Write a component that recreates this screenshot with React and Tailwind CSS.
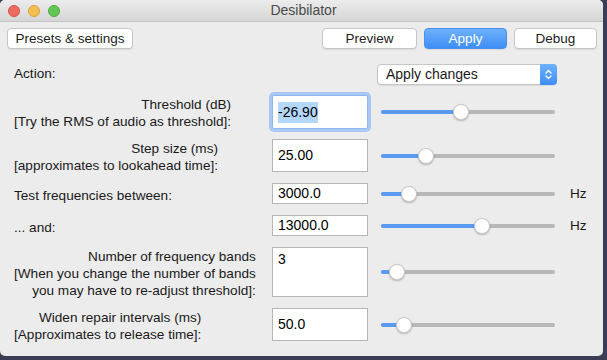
import React from 'react';

const font = { fontFamily: '"Liberation Sans", Arial, sans-serif' };

function MacButton({ text, primary, className }) {
  return (
    <button
      className={
        (primary
          ? 'border-[#4a90ef] bg-gradient-to-b from-[#6cb1fb] to-[#3f8ef5] text-white '
          : 'border-[#c6c6c6] bg-white text-[#222] ') +
        'h-[21px] rounded-[4px] border text-[13.5px] shadow-[0_1px_1px_rgba(0,0,0,0.08)] ' +
        className
      }
    >
      {text}
    </button>
  );
}

function Slider({ pos }) {
  // pos = knob centre in px from the left of the track
  return (
    <div className="relative h-[18px] w-[174px]">
      <div className="absolute left-0 right-0 top-[7px] h-[4px] rounded-full bg-[#b8b8b8]" />
      <div
        className="absolute left-0 top-[7px] h-[4px] rounded-l-full bg-[#5b9af3]"
        style={{ width: pos }}
      />
      <div
        className="absolute top-[1px] h-[16px] w-[16px] rounded-full border border-[#c9c9c9] bg-white shadow-[0_1px_2px_rgba(0,0,0,0.25)]"
        style={{ left: pos - 8 }}
      />
    </div>
  );
}

function Field({ value, h, focus, multi }) {
  return (
    <div
      className={
        'w-[96px] shrink-0 bg-white px-[5px] text-[14px] text-black ' +
        (focus
          ? 'rounded-[2px] border border-[#8fb6ee] ring-[3px] ring-[#a9c8f3] '
          : 'border border-[#b7b7b7] ') +
        (multi ? 'pt-[1px]' : 'flex items-center')
      }
      style={{ height: h }}
    >
      {focus ? <span className="bg-[#b3d7ff]">{value}</span> : value}
    </div>
  );
}

function Row({ label, value, h, knob, hz, focus, multi, mb, lt }) {
  return (
    <div className="flex items-start" style={{ height: h, marginBottom: mb }}>
      <div className="w-[272px] shrink-0 pl-[14px]">
        <div
          className="inline-block whitespace-nowrap text-right text-[13.6px] leading-[17px] text-[#1a1a1a]"
          style={{ paddingTop: lt }}
        >
          {label.map((l) => (
            <div key={l}>{l}</div>
          ))}
        </div>
      </div>
      <Field value={value} h={h} focus={focus} multi={multi} />
      <div className="ml-[13px]" style={{ marginTop: (h - 18) / 2 }}>
        <Slider pos={knob} />
      </div>
      {hz && (
        <div
          className="ml-[15px] text-[13.6px] leading-[17px] text-[#1a1a1a]"
          style={{ marginTop: (h - 17) / 2 }}
        >
          Hz
        </div>
      )}
    </div>
  );
}

export default function App() {
  return (
    <div className="h-[360px] w-[607px] bg-[#3b3d55]" style={font}>
      <div className="h-[356px] w-[603px] overflow-hidden rounded-[5px] bg-[#ececec]">
        <div className="relative flex h-[22px] items-center border-b border-[#c4c4c4] bg-gradient-to-b from-[#ececec] to-[#d6d6d6]">
          <div className="flex gap-[8px] pl-[8px]">
            <span className="h-[12px] w-[12px] rounded-full border border-[#d0514a] bg-[#ee6a5f]" />
            <span className="h-[12px] w-[12px] rounded-full border border-[#d6a236] bg-[#f5bf4f]" />
            <span className="h-[12px] w-[12px] rounded-full border border-[#52a83c] bg-[#62c655]" />
          </div>
          <div className="absolute inset-0 flex items-center justify-center pl-[4px] text-[14px] text-[#4a4a4a]">
            Desibilator
          </div>
        </div>

        <div className="mt-[6px] flex h-[21px] items-center pl-[7px] pr-[6px]">
          <MacButton text="Presets & settings" className="w-[126px]" />
          <div className="ml-auto flex gap-[7px]">
            <MacButton text="Preview" className="w-[95px]" />
            <MacButton text="Apply" primary className="w-[83px]" />
            <MacButton text="Debug" className="w-[83px]" />
          </div>
        </div>

        <div className="mt-[15px] flex items-center">
          <div className="w-[377px] pl-[14px] text-[13.6px] text-[#1a1a1a]">Action:</div>
          <div className="flex h-[21px] w-[180px] items-center rounded-[4px] border border-[#c6c6c6] bg-white shadow-[0_1px_1px_rgba(0,0,0,0.08)]">
            <span className="flex-1 pl-[8px] text-[14px] text-[#1a1a1a]">Apply changes</span>
            <span className="-mr-px flex h-[21px] w-[17px] items-center justify-center rounded-r-[4px] bg-gradient-to-b from-[#6cb1fb] to-[#3f8ef5]">
              <svg width="9" height="13" viewBox="0 0 9 13" fill="none" stroke="white" strokeWidth="1.4" strokeLinecap="round" strokeLinejoin="round">
                <path d="M2 5 L4.5 2.5 L7 5" />
                <path d="M2 8 L4.5 10.5 L7 8" />
              </svg>
            </span>
          </div>
        </div>

        <div className="mt-[10px]">
          <Row label={['Threshold (dB)', '[Try the RMS of audio as threshold]:']} value="-26.90" h={34} lt={1} knob={80} focus mb={10} />
          <Row label={['Step size (ms)', '[approximates to lookahead time]:']} value="25.00" h={33} lt={1} knob={45} mb={11} />
          <Row label={['Test frequencies between:']} value="3000.0" h={21} lt={2} knob={28} hz mb={11} />
          <Row label={['... and:']} value="13000.0" h={21} lt={2} knob={101} hz mb={11} />
          <Row
            label={['Number of frequency bands', '[When you change the number of bands', 'you may have to re-adjust threshold]:']}
            value="3"
            h={50}
            lt={1}
            knob={16}
            multi
            mb={11}
          />
          <Row label={['Widen repair intervals (ms)', '[Approximates to release time]:']} value="50.0" h={33} lt={1} knob={23} />
        </div>
      </div>
    </div>
  );
}
